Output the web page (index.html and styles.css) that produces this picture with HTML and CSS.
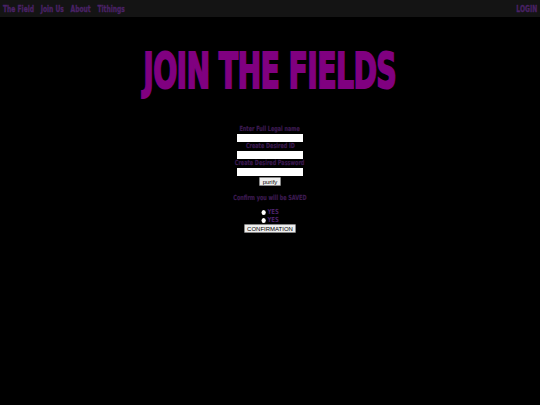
FILE: index.html
```html
<!DOCTYPE html>
<html>
<head>
<meta charset="utf-8">
<link rel="stylesheet" href="styles.css">
</head>
<body>
<nav class="nav">
  <div class="nav-left">
    <a class="nav-link">The Field</a>
    <a class="nav-link">Join Us</a>
    <a class="nav-link">About</a>
    <a class="nav-link">Tithings</a>
  </div>
  <div class="nav-right">
    <a class="nav-link">LOGIN</a>
  </div>
</nav>
<h1 class="title"><span class="title-text">JOIN THE FIELDS</span></h1>
<form class="form">
  <label class="label">Enter Full Legal name</label>
  <input class="field" type="text">
  <label class="label">Create Desired ID</label>
  <input class="field" type="text">
  <label class="label">Create Desired Password</label>
  <input class="field" type="password">
  <button class="btn" type="button">purify</button>
  <p class="confirm">Confirm you will be SAVED</p>
  <label class="radio"><span class="dot"></span>YES</label>
  <label class="radio"><span class="dot"></span>YES</label>
  <button class="btn btn-confirm" type="button">CONFIRMATION</button>
</form>
</body>
</html>
```
FILE: styles.css
```css
html, body {
  margin: 0;
  padding: 0;
  background: #000;
  height: 100%;
}
body {
  font-family: Impact, "Liberation Sans Narrow", "DejaVu Sans Condensed", sans-serif;
}
.nav {
  background: #141414;
  height: 17px;
  display: flex;
  justify-content: space-between;
  align-items: center;
  padding: 0 3px;
}
.nav-left {
  display: flex;
  gap: 9px;
  transform: scaleX(0.74);
  transform-origin: left center;
}
.nav-right {
  display: flex;
  transform: scaleX(0.74);
  transform-origin: right center;
}
.nav-link {
  color: #4a2266;
  font-weight: bold;
  font-size: 9px;
  -webkit-text-stroke: 0.3px #4a2266;
}
.title {
  margin: 34px 0 0;
  text-align: center;
  line-height: 40px;
  height: 40px;
}
.title-text {
  display: inline-block;
  color: #800080;
  font-size: 50px;
  line-height: 40px;
  font-weight: bold;
  letter-spacing: -1px;
  -webkit-text-stroke: 2px #800080;
  transform: scaleX(0.63);
  vertical-align: top;
}
.form {
  margin-top: 34px;
  display: flex;
  flex-direction: column;
  align-items: center;
}
.label {
  color: #3c1a50;
  font-size: 7px;
  font-weight: bold;
  line-height: 8px;
  transform: scaleX(0.78);
  -webkit-text-stroke: 0.2px #3c1a50;
}
.field {
  width: 66px;
  height: 8px;
  box-sizing: border-box;
  border: none;
  padding: 0;
  margin: 1px 0 0;
  background: #fff;
}
.btn {
  font-family: "Liberation Sans", Arial, sans-serif;
  font-size: 6px;
  padding: 1px 3px;
  height: 9px;
  line-height: 6px;
  border: 1px solid #888;
  border-radius: 1px;
  background: #eee;
  color: #000;
  margin-top: 1px;
}
.btn-confirm {
  margin-top: 0;
  padding: 1px 2px;
}
.confirm {
  margin: 8px 0 6px;
  color: #3c1a50;
  font-size: 7px;
  font-weight: bold;
  transform: scaleX(0.78);
  -webkit-text-stroke: 0.2px #3c1a50;
}
.radio {
  display: flex;
  align-items: center;
  gap: 2px;
  color: #4a2266;
  font-size: 7px;
  font-weight: bold;
  line-height: 8px;
  transform: scaleX(0.85);
}
.dot {
  width: 5px;
  height: 5px;
  border-radius: 50%;
  background: #fff;
}
```
